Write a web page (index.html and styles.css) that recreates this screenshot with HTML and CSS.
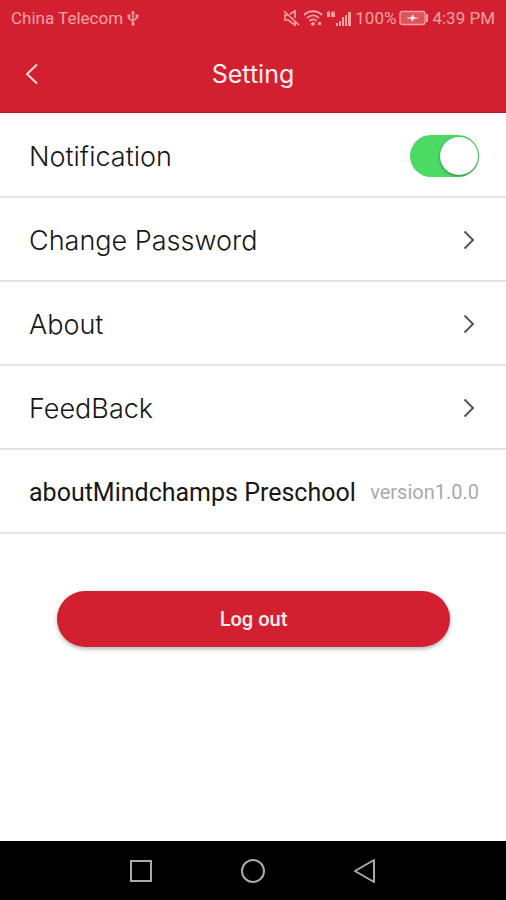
FILE: index.html
```html
<!DOCTYPE html>
<html lang="en">
<head>
<meta charset="utf-8">
<meta name="viewport" content="width=device-width, initial-scale=1">
<title>Setting</title>
<link rel="stylesheet" href="styles.css">
</head>
<body>
<div class="screen">
  <header class="header">
    <div class="status">
      <div class="status-group">
        <span>China Telecom</span>
        <svg class="usb" width="12" height="16" viewBox="0 0 12 16" fill="none" stroke="currentColor" stroke-width="1.5" aria-hidden="true">
          <path d="M6 2v12M2 6v2.500l4 3M10 5v3l-4 2.500"/>
          <path d="M6 0l2 3.500H4zM.5 4.500h3v3h-3zM8.500 4.500h3v3h-3zM4.500 12.500h3v3h-3z" fill="currentColor" stroke="none"/>
        </svg>
      </div>
      <div class="status-group status-right">
        <svg width="17" height="18" viewBox="0 0 17 18" fill="none" stroke="currentColor" stroke-width="1.700" aria-hidden="true">
          <path d="M1 2l15 14M5 6H2v5h3l7 5v-4M7 5l5-3v7"/>
        </svg>
        <svg width="20" height="18" viewBox="0 0 20 18" fill="none" stroke="currentColor" stroke-width="1.800" aria-hidden="true">
          <path d="M1 6c5-5 13-5 18 0M4 9c4-3.500 8-3.500 12 0M6.500 12c2-2 5-2 7 0"/>
          <path d="M10 12.500l2.500 2.500-2.500 2-2.500-2zM15 13h3v3h-3z" fill="currentColor" stroke="none"/>
        </svg>
        <svg width="26" height="18" viewBox="0 0 26 18" fill="currentColor" aria-hidden="true">
          <path d="M1 3l3-1v1L3 4h1v4H1zM5 3l4-1v1L7 4h2v4H5z"/>
          <path d="M10 14h2v3h-2zM13 12h2v5h-2zM16 8h2v9h-2zM19 6h2v11h-2zM22 3h3v14h-3z"/>
        </svg>
        <span>100%</span>
        <svg class="battery" width="30" height="16" viewBox="0 0 30 16" aria-hidden="true">
          <rect x="1" y="1.500" width="25" height="13" rx="2" fill="currentColor" fill-opacity=".4" stroke="currentColor" stroke-width="1.300"/>
          <path d="M27 4h2v8h-2z" fill="currentColor"/>
          <path d="M7 8l5-1 2-3 1 3 5 1-5 1-2 3-1-3z" fill="#ffe4e2"/>
        </svg>
        <span>4:39 PM</span>
      </div>
    </div>
    <div class="titlebar">
      <button class="back" type="button" aria-label="Back">
        <svg width="14" height="22" viewBox="0 0 14 22" fill="none" stroke="currentColor" stroke-width="1.800" aria-hidden="true"><path d="M12 1.500L2 11l10 9.500"/></svg>
      </button>
      <h1 class="title">Setting</h1>
    </div>
  </header>

  <main class="content">
    <div class="row">
      <label for="notify">Notification</label>
      <input class="switch" id="notify" type="checkbox" role="switch" checked>
    </div>
    <a class="row" href="#password"><span>Change Password</span>
      <svg class="chevron" width="12" height="20" viewBox="0 0 12 20" aria-hidden="true"><path d="M1.500 1.500l8.500 8.500-8.500 8.500"/></svg></a>
    <a class="row" href="#about"><span>About</span>
      <svg class="chevron" width="12" height="20" viewBox="0 0 12 20" aria-hidden="true"><path d="M1.500 1.500l8.500 8.500-8.500 8.500"/></svg></a>
    <a class="row" href="#feedback"><span>FeedBack</span>
      <svg class="chevron" width="12" height="20" viewBox="0 0 12 20" aria-hidden="true"><path d="M1.500 1.500l8.500 8.500-8.500 8.500"/></svg></a>
    <div class="row product">
      <span>aboutMindchamps Preschool</span>
      <span class="version">version1.0.0</span>
    </div>
    <button class="logout" type="button">Log out</button>
  </main>

  <nav class="navbar" aria-label="System">
    <button type="button" aria-label="Recent apps"><svg width="24" height="26" viewBox="0 0 24 26"><rect x="2" y="3" width="20" height="20"/></svg></button>
    <button type="button" aria-label="Home"><svg width="24" height="26" viewBox="0 0 24 26"><circle cx="12" cy="13" r="11"/></svg></button>
    <button type="button" aria-label="Back"><svg width="24" height="26" viewBox="0 0 24 26"><path d="M21 2v22L2 13z" stroke-linejoin="round"/></svg></button>
  </nav>
</div>
</body>
</html>
```
FILE: styles.css
```css
* {
  box-sizing: border-box;
}

body {
  margin: 0;
  background: #fff;
  color: #171717;
  font-family: Roboto, "Liberation Sans", sans-serif;
}

button {
  border: 0;
  padding: 0;
  font: inherit;
  cursor: pointer;
}

svg {
  display: block;
  flex: none;
}

.screen {
  display: flex;
  flex-direction: column;
  min-height: 100vh;
}

.header {
  background: #d32030;
  color: #fff;
  border-bottom: 1px solid #bd1424;
}

.status {
  display: flex;
  justify-content: space-between;
  align-items: center;
  height: 36px;
  padding: 0 11px;
  color: #f6a0a2;
  font-size: 17px;
  white-space: nowrap;
}

.status-group {
  display: flex;
  align-items: center;
  gap: 4px;
}

.status-right {
  gap: 3px;
}

.titlebar {
  display: grid;
  grid-template-columns: 64px 1fr 64px;
  align-items: center;
  height: 76px;
}

.back {
  display: grid;
  place-items: center;
  height: 64px;
  background: none;
  color: #ffe4e2;
}

.title {
  margin: 0;
  color: #ffeceb;
  font: 400 25px/32px Inter, sans-serif;
  text-align: center;
}

.content {
  flex: 1;
  display: flex;
  flex-direction: column;
  padding-top: 1px;
}

.row {
  display: flex;
  justify-content: space-between;
  align-items: center;
  height: 84px;
  padding: 2px 27px 0 29px;
  border-bottom: 2px solid #e5e5e5;
  color: inherit;
  font-family: Inter, sans-serif;
  font-size: 27px;
  font-weight: 300;
  text-decoration: none;
}

.chevron {
  margin-right: 4px;
  fill: none;
  stroke: #555;
  stroke-width: 2;
}

.switch {
  appearance: none;
  display: flex;
  justify-content: flex-end;
  width: 69px;
  height: 42px;
  margin: 0;
  padding: 2px 1px;
  border-radius: 21px;
  background: #4cd964;
}

.switch::before {
  content: "";
  width: 38px;
  height: 38px;
  border-radius: 50%;
  background: #fff;
  box-shadow: 0 1px 3px rgb(0 0 0 / 40%);
}

.switch:not(:checked) {
  justify-content: flex-start;
  background: #ddd;
}

.product {
  font-family: Roboto, sans-serif;
  font-size: 25px;
  font-weight: 400;
}

.version {
  color: #aaa;
  font-size: 20px;
}

.logout {
  height: 56px;
  margin: 57px 56px 32px 57px;
  border-radius: 28px;
  background: #d32030;
  box-shadow: 0 2px 4px rgb(0 0 0 / 30%);
  color: #fff0ee;
  font-size: 20px;
  font-weight: 500;
}

.navbar {
  display: flex;
  justify-content: center;
  align-items: center;
  gap: 88px;
  height: 59px;
  background: #000;
}

.navbar button {
  background: none;
}

.navbar svg {
  fill: none;
  stroke: #aaa;
  stroke-width: 2;
}
```
